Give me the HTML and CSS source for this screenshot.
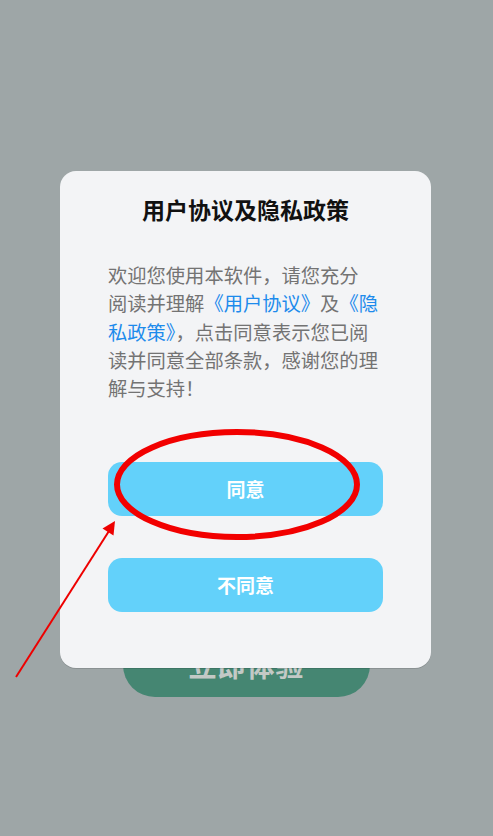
FILE: index.html
```html
<!DOCTYPE html>
<html lang="zh-CN">
<head>
<meta charset="utf-8">
<title>用户协议及隐私政策</title>
<link rel="stylesheet" href="styles.css">
</head>
<body>
<div class="screen">
  <div class="bg-content">
    <div class="start-btn">立即体验</div>
  </div>
  <div class="dialog">
    <h1 class="dialog-title">用户协议及隐私政策</h1>
    <p class="dialog-body">欢迎您使用本软件，请您充分<br>阅读并理解<span class="link">《用户协议》</span>及<span class="link">《隐<br>私政策》</span>，点击同意表示您已阅<br>读并同意全部条款，感谢您的理<br>解与支持！</p>
    <div class="actions">
      <button class="btn">同意</button>
      <button class="btn">不同意</button>
    </div>
  </div>
  <svg class="annotation" width="493" height="836" viewBox="0 0 493 836">
    <ellipse cx="237" cy="484.5" rx="120" ry="52.5" fill="none" stroke="#f20000" stroke-width="6"/>
    <line x1="16" y1="677" x2="109" y2="531" stroke="#ee0000" stroke-width="2"/>
    <polygon points="115,521 102.5,528.5 113.5,535.5" fill="#ee0000"/>
  </svg>
</div>
</body>
</html>
```
FILE: styles.css
```css
html, body {
  margin: 0;
  padding: 0;
}
body {
  background: #9ea6a7;
  font-family: "Noto Sans CJK SC", "Noto Sans", sans-serif;
  width: 493px;
  height: 836px;
  overflow: hidden;
}
.screen {
  position: relative;
  width: 493px;
  height: 836px;
}
.bg-content {
  padding-top: 633px;
  display: flex;
  justify-content: center;
}
.start-btn {
  width: 247px;
  height: 64px;
  border-radius: 32px;
  background: #458672;
  color: #c3c9c6;
  font-size: 28px;
  font-weight: 700;
  line-height: 64px;
  text-align: center;
  letter-spacing: 1px;
}
.dialog {
  position: absolute;
  left: 60px;
  top: 171px;
  width: 371px;
  box-sizing: border-box;
  padding: 22px 48px 56px;
  background: #f3f4f6;
  border-radius: 16px;
  box-shadow: 0 1px 0 rgba(0, 0, 0, 0.12);
}
.dialog-title {
  margin: 0;
  font-size: 23px;
  line-height: 32px;
  font-weight: 600;
  color: #111111;
  text-align: center;
}
.dialog-body {
  margin: 36px 0 0;
  font-size: 19.3px;
  line-height: 28.3px;
  font-weight: 400;
  color: #737373;
  white-space: nowrap;
}
.link {
  color: #1d8bec;
}
.actions {
  margin-top: 59.5px;
  display: flex;
  flex-direction: column;
  gap: 42px;
}
.btn {
  display: block;
  width: 100%;
  height: 54px;
  border: none;
  border-radius: 14px;
  background: #63d1fa;
  color: #ffffff;
  font-family: "Noto Sans CJK SC", "Noto Sans", sans-serif;
  font-size: 19px;
  font-weight: 600;
  padding: 0;
}
.annotation {
  position: absolute;
  left: 0;
  top: 0;
  pointer-events: none;
}
```
